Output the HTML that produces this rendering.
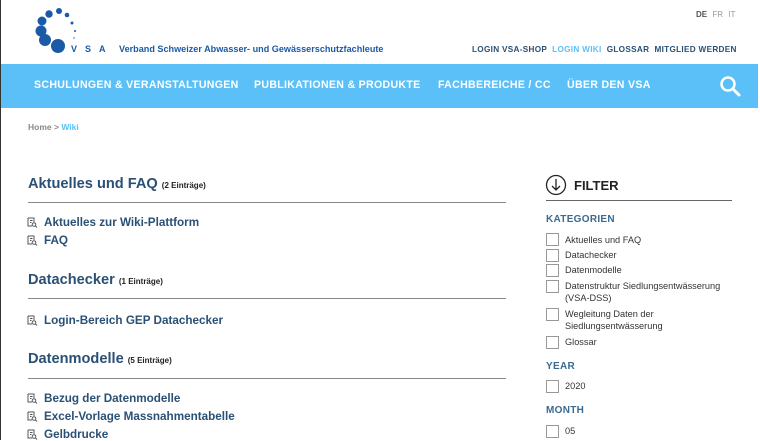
<!DOCTYPE html>
<html><head><meta charset="utf-8"><style>
*{margin:0;padding:0;box-sizing:border-box}
body{width:760px;height:440px;overflow:hidden;background:#fff;font-family:"Liberation Sans","DejaVu Sans",sans-serif;position:relative;border-left:1px solid #333}
.a{position:absolute;white-space:nowrap}
.nav{position:absolute;left:0;top:64px;width:757px;height:44px;background:#5bc0f8}
.nav span{position:absolute;top:15px;color:#fff;font-weight:bold;font-size:10.6px;letter-spacing:.3px}
.h{color:#2a5075;font-weight:bold;font-size:14.6px}
.h small{font-size:8px;color:#222}
.line{position:absolute;height:1px;background:#888}
.it{color:#2a5075;font-weight:bold;font-size:11.7px}
.ic{position:absolute}
.sb{color:#3a6a90;font-weight:bold;font-size:10px;letter-spacing:.3px}
.cb{position:absolute;width:13px;height:13px;border:1px solid #999;left:545px}
.ct{position:absolute;left:564px;font-size:9.2px;color:#333;line-height:12px}
</style></head><body>
<svg class="a" style="left:0;top:0" width="110" height="60">
<g fill="#1a5aa6">
<circle cx="57" cy="46" r="7"/><circle cx="44" cy="40" r="6"/><circle cx="40" cy="31" r="5.5"/><circle cx="41" cy="21" r="4.5"/><circle cx="48" cy="14" r="3.7"/><circle cx="58" cy="11" r="3"/><circle cx="66" cy="15" r="2.3"/><circle cx="71" cy="23" r="1.5"/><circle cx="74" cy="31" r="1"/><circle cx="73" cy="38" r=".7"/>
</g></svg>
<div class="a" style="left:70px;top:44px;font-size:9px;font-weight:bold;color:#1a5aa6;letter-spacing:8px">VSA</div>
<div class="a" style="left:118px;top:44px;font-size:9.1px;font-weight:bold;color:#1a5aa6">Verband Schweizer Abwasser- und Gewässerschutzfachleute</div>
<div class="a" style="left:695px;top:10px;font-size:8px;font-weight:bold;color:#555;word-spacing:3px">DE <span style="color:#999;font-weight:normal">FR IT</span></div>
<div class="a" style="left:471px;top:45px;font-size:8.2px;font-weight:bold;color:#2a5075;letter-spacing:.3px">LOGIN VSA-SHOP &nbsp;<span style="color:#5bc0f8">LOGIN WIKI</span> &nbsp;GLOSSAR &nbsp;MITGLIED WERDEN</div>
<div class="nav">
<span style="left:33px">SCHULUNGEN &amp; VERANSTALTUNGEN</span>
<span style="left:253px">PUBLIKATIONEN &amp; PRODUKTE</span>
<span style="left:437px">FACHBEREICHE / CC</span>
<span style="left:566px">ÜBER DEN VSA</span>
<svg style="position:absolute;left:718px;top:11px" width="22" height="22"><circle cx="9" cy="9" r="6.5" stroke="#fff" stroke-width="2.5" fill="none"/><path d="M14 14 L20 20" stroke="#fff" stroke-width="3" stroke-linecap="round"/></svg>
</div>
<div class="a" style="left:27px;top:122px;font-size:8.5px;font-weight:bold;color:#888">Home &gt; <span style="color:#5bc0f8">Wiki</span></div>

<svg width="0" height="0" style="position:absolute"><defs><g id="d"><path d="M1 1 H7 V5 M1 1 V9 H5 M3 3.5 H5.5 M3 5.5 H4.5" stroke="#555" stroke-width="1" fill="none"/><circle cx="7" cy="7.5" r="1.8" stroke="#555" stroke-width="1" fill="none"/><path d="M8.3 8.8 L10 10.5" stroke="#555" stroke-width="1"/></g></defs></svg>

<div class="a h" style="left:27px;top:176px">Aktuelles und FAQ <small>(2 Einträge)</small></div>
<div class="line" style="left:27px;top:202px;width:478px"></div>
<svg class="ic" style="left:26px;top:217px" width="12" height="12"><use href="#d"/></svg><div class="a it" style="left:43px;top:216px">Aktuelles zur Wiki-Plattform</div>
<svg class="ic" style="left:26px;top:235px" width="12" height="12"><use href="#d"/></svg><div class="a it" style="left:43px;top:234px">FAQ</div>

<div class="a h" style="left:27px;top:272px">Datachecker <small>(1 Einträge)</small></div>
<div class="line" style="left:27px;top:298px;width:478px"></div>
<svg class="ic" style="left:26px;top:315px" width="12" height="12"><use href="#d"/></svg><div class="a it" style="left:43px;top:314px">Login-Bereich GEP Datachecker</div>

<div class="a h" style="left:27px;top:351px">Datenmodelle <small>(5 Einträge)</small></div>
<div class="line" style="left:27px;top:378px;width:478px"></div>
<svg class="ic" style="left:26px;top:393px" width="12" height="12"><use href="#d"/></svg><div class="a it" style="left:43px;top:392px">Bezug der Datenmodelle</div>
<svg class="ic" style="left:26px;top:411px" width="12" height="12"><use href="#d"/></svg><div class="a it" style="left:43px;top:410px">Excel-Vorlage Massnahmentabelle</div>
<svg class="ic" style="left:26px;top:429px" width="12" height="12"><use href="#d"/></svg><div class="a it" style="left:43px;top:428px">Gelbdrucke</div>

<svg class="a" style="left:544px;top:174px" width="22" height="22"><circle cx="11" cy="11" r="9.5" stroke="#222" stroke-width="1.3" fill="none"/><path d="M11 5 V16 M7 12 L11 16 L15 12" stroke="#222" stroke-width="1.3" fill="none"/></svg>
<div class="a" style="left:573px;top:178px;font-size:13px;font-weight:bold;color:#222">FILTER</div>
<div class="line" style="left:545px;top:200px;width:186px;background:#666"></div>
<div class="a sb" style="left:545px;top:214px">KATEGORIEN</div>
<div class="cb" style="top:233px"></div><div class="ct" style="top:234px">Aktuelles und FAQ</div>
<div class="cb" style="top:249px"></div><div class="ct" style="top:249px">Datachecker</div>
<div class="cb" style="top:264px"></div><div class="ct" style="top:264px">Datenmodelle</div>
<div class="cb" style="top:280px"></div><div class="ct" style="top:280px">Datenstruktur Siedlungsentwässerung<br>(VSA-DSS)</div>
<div class="cb" style="top:308px"></div><div class="ct" style="top:308px">Wegleitung Daten der<br>Siedlungsentwässerung</div>
<div class="cb" style="top:336px"></div><div class="ct" style="top:336px">Glossar</div>
<div class="a sb" style="left:545px;top:361px">YEAR</div>
<div class="cb" style="top:380px"></div><div class="ct" style="top:380px">2020</div>
<div class="a sb" style="left:545px;top:405px">MONTH</div>
<div class="cb" style="top:425px"></div><div class="ct" style="top:425px">05</div>
</body></html>
